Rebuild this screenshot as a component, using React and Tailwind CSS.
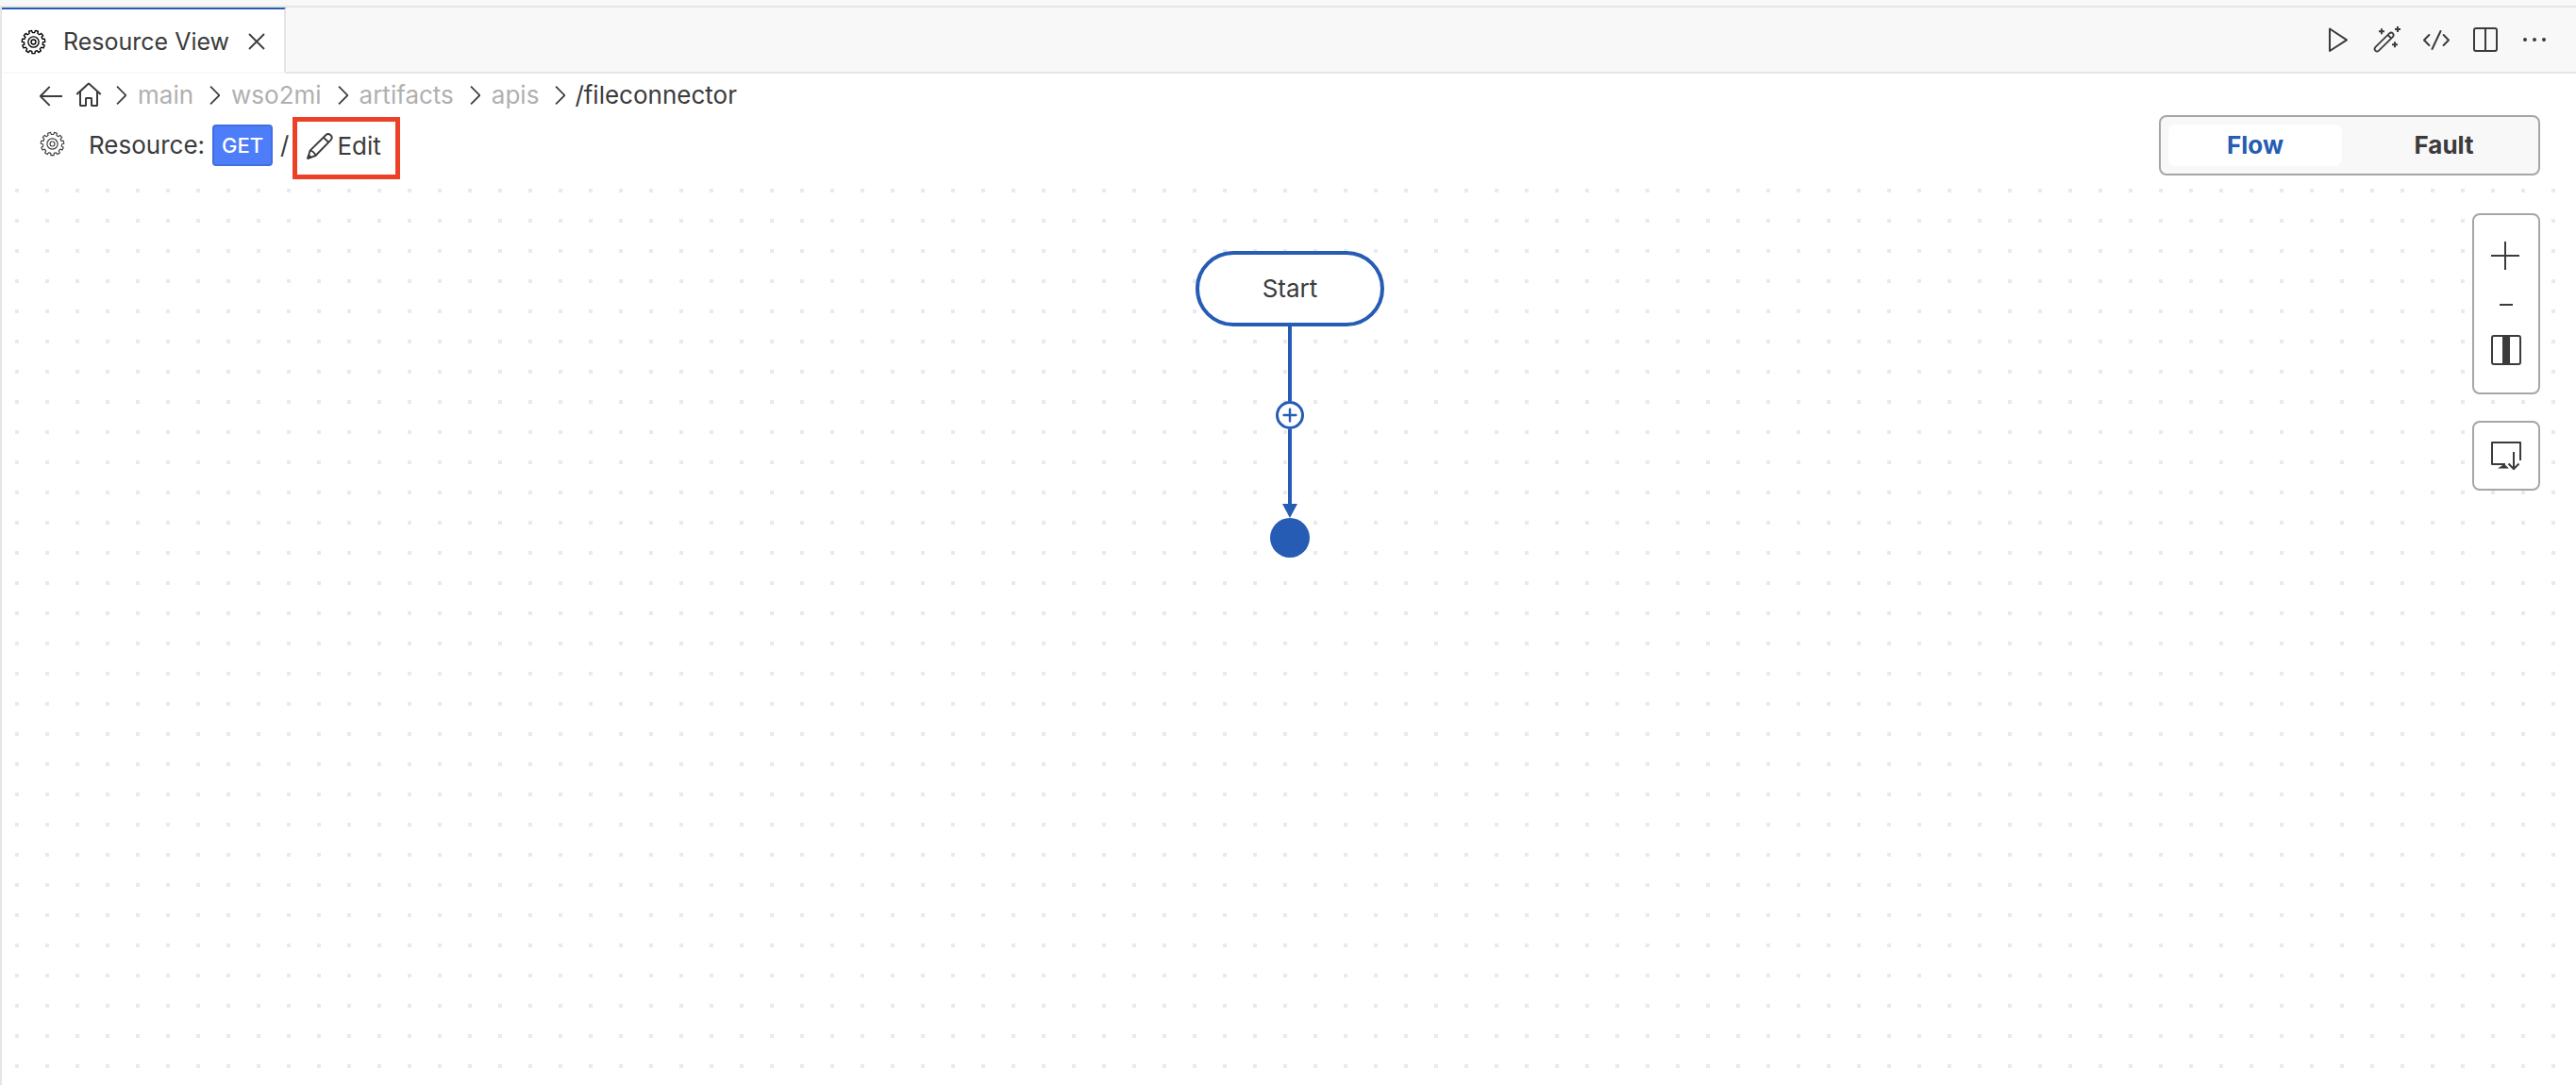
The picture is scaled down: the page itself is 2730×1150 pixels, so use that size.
import { Fragment } from "react";
import { VscArrowLeft, VscHome, VscChevronRight } from "react-icons/vsc";

const crumbs = ["main", "wso2mi", "artifacts", "apis"];

function gearPath() {
  const teeth = 11;
  const step = (Math.PI * 2) / teeth;
  const point = (r, a) => `${(12 + r * Math.cos(a)).toFixed(2)} ${(12 + r * Math.sin(a)).toFixed(2)}`;
  const parts = [];
  for (let i = 0; i < teeth; i++) {
    const a = i * step + Math.PI / 2;
    parts.push(
      point(8.9, a - step * 0.3),
      point(10.9, a - step * 0.22),
      point(10.9, a + step * 0.22),
      point(8.9, a + step * 0.3)
    );
  }
  return `M${parts.join("L")}Z`;
}

const GEAR = gearPath();

function GearIcon({ className, strokeWidth }) {
  return (
    <svg viewBox="0 0 24 24" className={className} fill="none" stroke="currentColor" strokeWidth={strokeWidth} strokeLinejoin="round" aria-hidden="true">
      <path d={GEAR} />
      <circle cx="12" cy="12" r="5" />
      <circle cx="12" cy="12" r="2.2" />
    </svg>
  );
}

function CloseIcon() {
  return (
    <svg viewBox="0 0 18 18" className="size-[18px]" fill="none" stroke="currentColor" strokeWidth="1.8" aria-hidden="true">
      <path d="M1 1L17 17M17 1L1 17" />
    </svg>
  );
}

function PencilIcon() {
  return (
    <svg viewBox="0 0 28 28" className="size-7" fill="none" stroke="currentColor" strokeWidth="1.9" strokeLinejoin="round" aria-hidden="true">
      <path d="M1.2 26.8L3.6 18.6L20.2 2.2C21.6 .8 23.8 .8 25.2 2C27 3.6 27 5.8 25.6 7.4L9.4 24Z" />
      <path d="M3.6 18.6C6.4 19 8.6 21 9.4 24M17.8 4.6L23.2 9.8" />
      <path d="M1.2 26.8L2.2 23.4L4.6 25.8Z" fill="currentColor" />
    </svg>
  );
}

function PlayIcon() {
  return (
    <svg viewBox="0 0 32 32" className="size-8" fill="none" stroke="currentColor" strokeWidth="2" strokeLinejoin="round" aria-hidden="true">
      <path d="M7 4.5V28L25 16.3Z" />
    </svg>
  );
}

function WandIcon() {
  return (
    <svg viewBox="0 0 32 32" className="size-8" fill="none" stroke="currentColor" strokeWidth="1.8" aria-hidden="true">
      <path d="M3.2 24.2L18.4 9.2A2.6 2.6 0 0 1 22 12.9L6.8 27.9A2.6 2.6 0 0 1 3.2 24.2ZM16.6 11L20.2 14.6" />
      <path d="M10 4.2V10.2M7 7.2H13M27 2V8M24 5H30M24 18.2V24.2M21 21.2H27" strokeWidth="2" />
    </svg>
  );
}

function CodeIcon() {
  return (
    <svg viewBox="0 0 32 32" className="size-8" fill="none" stroke="currentColor" strokeWidth="2" strokeLinecap="round" strokeLinejoin="round" aria-hidden="true">
      <path d="M8.4 11L3 16.5L8.4 22M23.6 11L29 16.5L23.6 22M20.5 7L11.5 26" />
    </svg>
  );
}

function SplitIcon() {
  return (
    <svg viewBox="0 0 32 32" className="size-8" fill="none" stroke="currentColor" strokeWidth="2" aria-hidden="true">
      <rect x="4" y="4" width="24" height="24" rx="2" />
      <path d="M16 4V28" />
    </svg>
  );
}

function MoreIcon() {
  return (
    <svg viewBox="0 0 32 32" className="size-8" fill="currentColor" aria-hidden="true">
      <circle cx="6" cy="16" r="2" />
      <circle cx="16" cy="16" r="2" />
      <circle cx="26" cy="16" r="2" />
    </svg>
  );
}

function PlusIcon() {
  return (
    <svg viewBox="0 0 32 32" className="size-8" stroke="currentColor" strokeWidth="2" aria-hidden="true">
      <path d="M15 1V31M0 16H30" />
    </svg>
  );
}

function MinusIcon() {
  return (
    <svg viewBox="0 0 32 8" className="h-2 w-8" stroke="currentColor" strokeWidth="2" aria-hidden="true">
      <path d="M9 4H23" />
    </svg>
  );
}

function FitIcon() {
  return (
    <svg viewBox="0 0 32 32" className="size-8" fill="none" stroke="currentColor" strokeWidth="2" aria-hidden="true">
      <rect x="1" y="1" width="30" height="30" rx="2" />
      <path d="M12 1V31H20V1Z" fill="currentColor" stroke="none" />
    </svg>
  );
}

function ScreenDownIcon() {
  return (
    <svg viewBox="0 0 32 32" className="size-8" fill="none" stroke="currentColor" strokeWidth="2" aria-hidden="true">
      <path d="M31 21V2H1V25H15" strokeLinejoin="round" />
      <path d="M7 29.5H19L14 25Z" fill="currentColor" stroke="none" />
      <path d="M24 12V30M18.5 24.5L24 30L29.5 24.5" />
    </svg>
  );
}

const actions = [
  ["Run", PlayIcon],
  ["AI assist", WandIcon],
  ["Show source", CodeIcon],
  ["Split editor", SplitIcon],
  ["More actions", MoreIcon],
];

function TabBar() {
  return (
    <div className="flex h-[70px] bg-[#f8f8f8] text-[25px]">
      <div className="flex items-center border-t-2 border-r-2 border-b-2 border-t-[#265cb3] border-r-[#e5e5e5] border-b-[#f8f8f8] bg-white pt-0.5 pl-5 pr-5">
        <GearIcon className="mr-[18px] size-[27px] text-black" strokeWidth="1.2" />
        <span className="mr-5">Resource View</span>
        <button aria-label="Close tab"><CloseIcon /></button>
      </div>
      <div className="flex flex-1 items-center justify-end gap-5 border-b-2 border-[#e5e5e5] pr-7">
        {actions.map(([label, Icon]) => (
          <button key={label} aria-label={label}><Icon /></button>
        ))}
      </div>
    </div>
  );
}

function Breadcrumbs() {
  return (
    <nav aria-label="Breadcrumb" className="flex h-11 items-center pl-9 pt-0.5">
      <button aria-label="Back" className="mr-2"><VscArrowLeft className="size-8" /></button>
      <button aria-label="Home" className="mr-0.5"><VscHome className="size-8" /></button>
      {crumbs.map((name) => (
        <Fragment key={name}>
          <VscChevronRight className="size-8" aria-hidden="true" />
          <a href="#" className="mr-1.5 ml-0.5 text-[#b0b0b0]">{name}</a>
        </Fragment>
      ))}
      <VscChevronRight className="size-8" aria-hidden="true" />
      <span>/fileconnector</span>
    </nav>
  );
}

function ResourceHeader() {
  return (
    <div className="flex h-16 justify-between pl-10 pr-[38px]">
      <div className="flex items-center">
        <GearIcon className="mr-[25px] mb-1 size-[27px]" strokeWidth="1" />
        <span className="mr-2">Resource:</span>
        <span className="flex h-11 w-16 items-center justify-center rounded-sm border-2 border-[#4070e0] bg-[#4e7df9] text-[22px] font-medium text-white">GET</span>
        <span className="ml-2">/</span>
        <button className="mt-0.5 ml-1 flex h-[66px] w-[114px] items-center gap-1 self-start border-5 border-[#ec4126] pb-1 pl-2.5">
          <PencilIcon />
          Edit
        </button>
      </div>
      <div className="flex h-16 w-[404px] rounded-lg border-2 border-[#a6a6a6] bg-[#f8f8f8] p-2 font-bold">
        <button className="flex-1 rounded-lg bg-white text-[#265cb3]">Flow</button>
        <button className="flex-1 pl-4">Fault</button>
      </div>
    </div>
  );
}

function Canvas() {
  return (
    <main className="relative mt-1 flex-1 bg-[conic-gradient(from_270deg_at_4px_4px,#e5ebf0_90deg,transparent_0)] bg-[length:32px_32px] bg-[position:14px_10px]">
      <div className="flex flex-col items-center pt-[76px] pl-0.5">
        <div className="flex h-20 w-[200px] items-center justify-center rounded-full border-4 border-[#265cb3] bg-white">Start</div>
        <div className="h-[79px] w-1 bg-[#265cb3]" />
        <button aria-label="Add step" className="flex size-[30px] items-center justify-center rounded-full border-3 border-[#265cb3] bg-white text-[#265cb3]">
          <svg viewBox="0 0 16 16" className="size-4" stroke="currentColor" strokeWidth="2.4" strokeLinecap="round" aria-hidden="true">
            <path d="M8 1.6V14.4M1.6 8H14.4" />
          </svg>
        </button>
        <div className="h-[79px] w-1 bg-[#265cb3]" />
        <svg viewBox="0 0 16 15" className="h-[15px] w-4" aria-hidden="true">
          <path d="M0 0H16L8 15Z" fill="#265cb3" />
        </svg>
        <div className="size-[42px] rounded-full bg-[#265cb3]" />
      </div>
      <div className="absolute top-9 right-[38px] flex w-[72px] flex-col gap-7">
        <div className="flex h-48 flex-col items-center rounded-lg border-2 border-[#a6a6a6] bg-white pt-[27px]">
          <button aria-label="Zoom in"><PlusIcon /></button>
          <button aria-label="Zoom out" className="mt-8 mb-7"><MinusIcon /></button>
          <button aria-label="Zoom to fit"><FitIcon /></button>
        </div>
        <button aria-label="Export image" className="flex h-[74px] items-center justify-center rounded-lg border-2 border-[#a6a6a6] bg-white">
          <ScreenDownIcon />
        </button>
      </div>
    </main>
  );
}

export default function App() {
  return (
    <div className="flex min-h-screen flex-col bg-white font-['Inter',sans-serif] text-[26px] leading-8 text-[#3b3b3b]">
      <div className="h-2 border-b-2 border-[#e5e5e5] bg-[#f8f8f8]" />
      <div className="flex flex-1 flex-col border-l-2 border-[#e5e5e5]">
        <TabBar />
        <Breadcrumbs />
        <ResourceHeader />
        <Canvas />
      </div>
    </div>
  );
}
